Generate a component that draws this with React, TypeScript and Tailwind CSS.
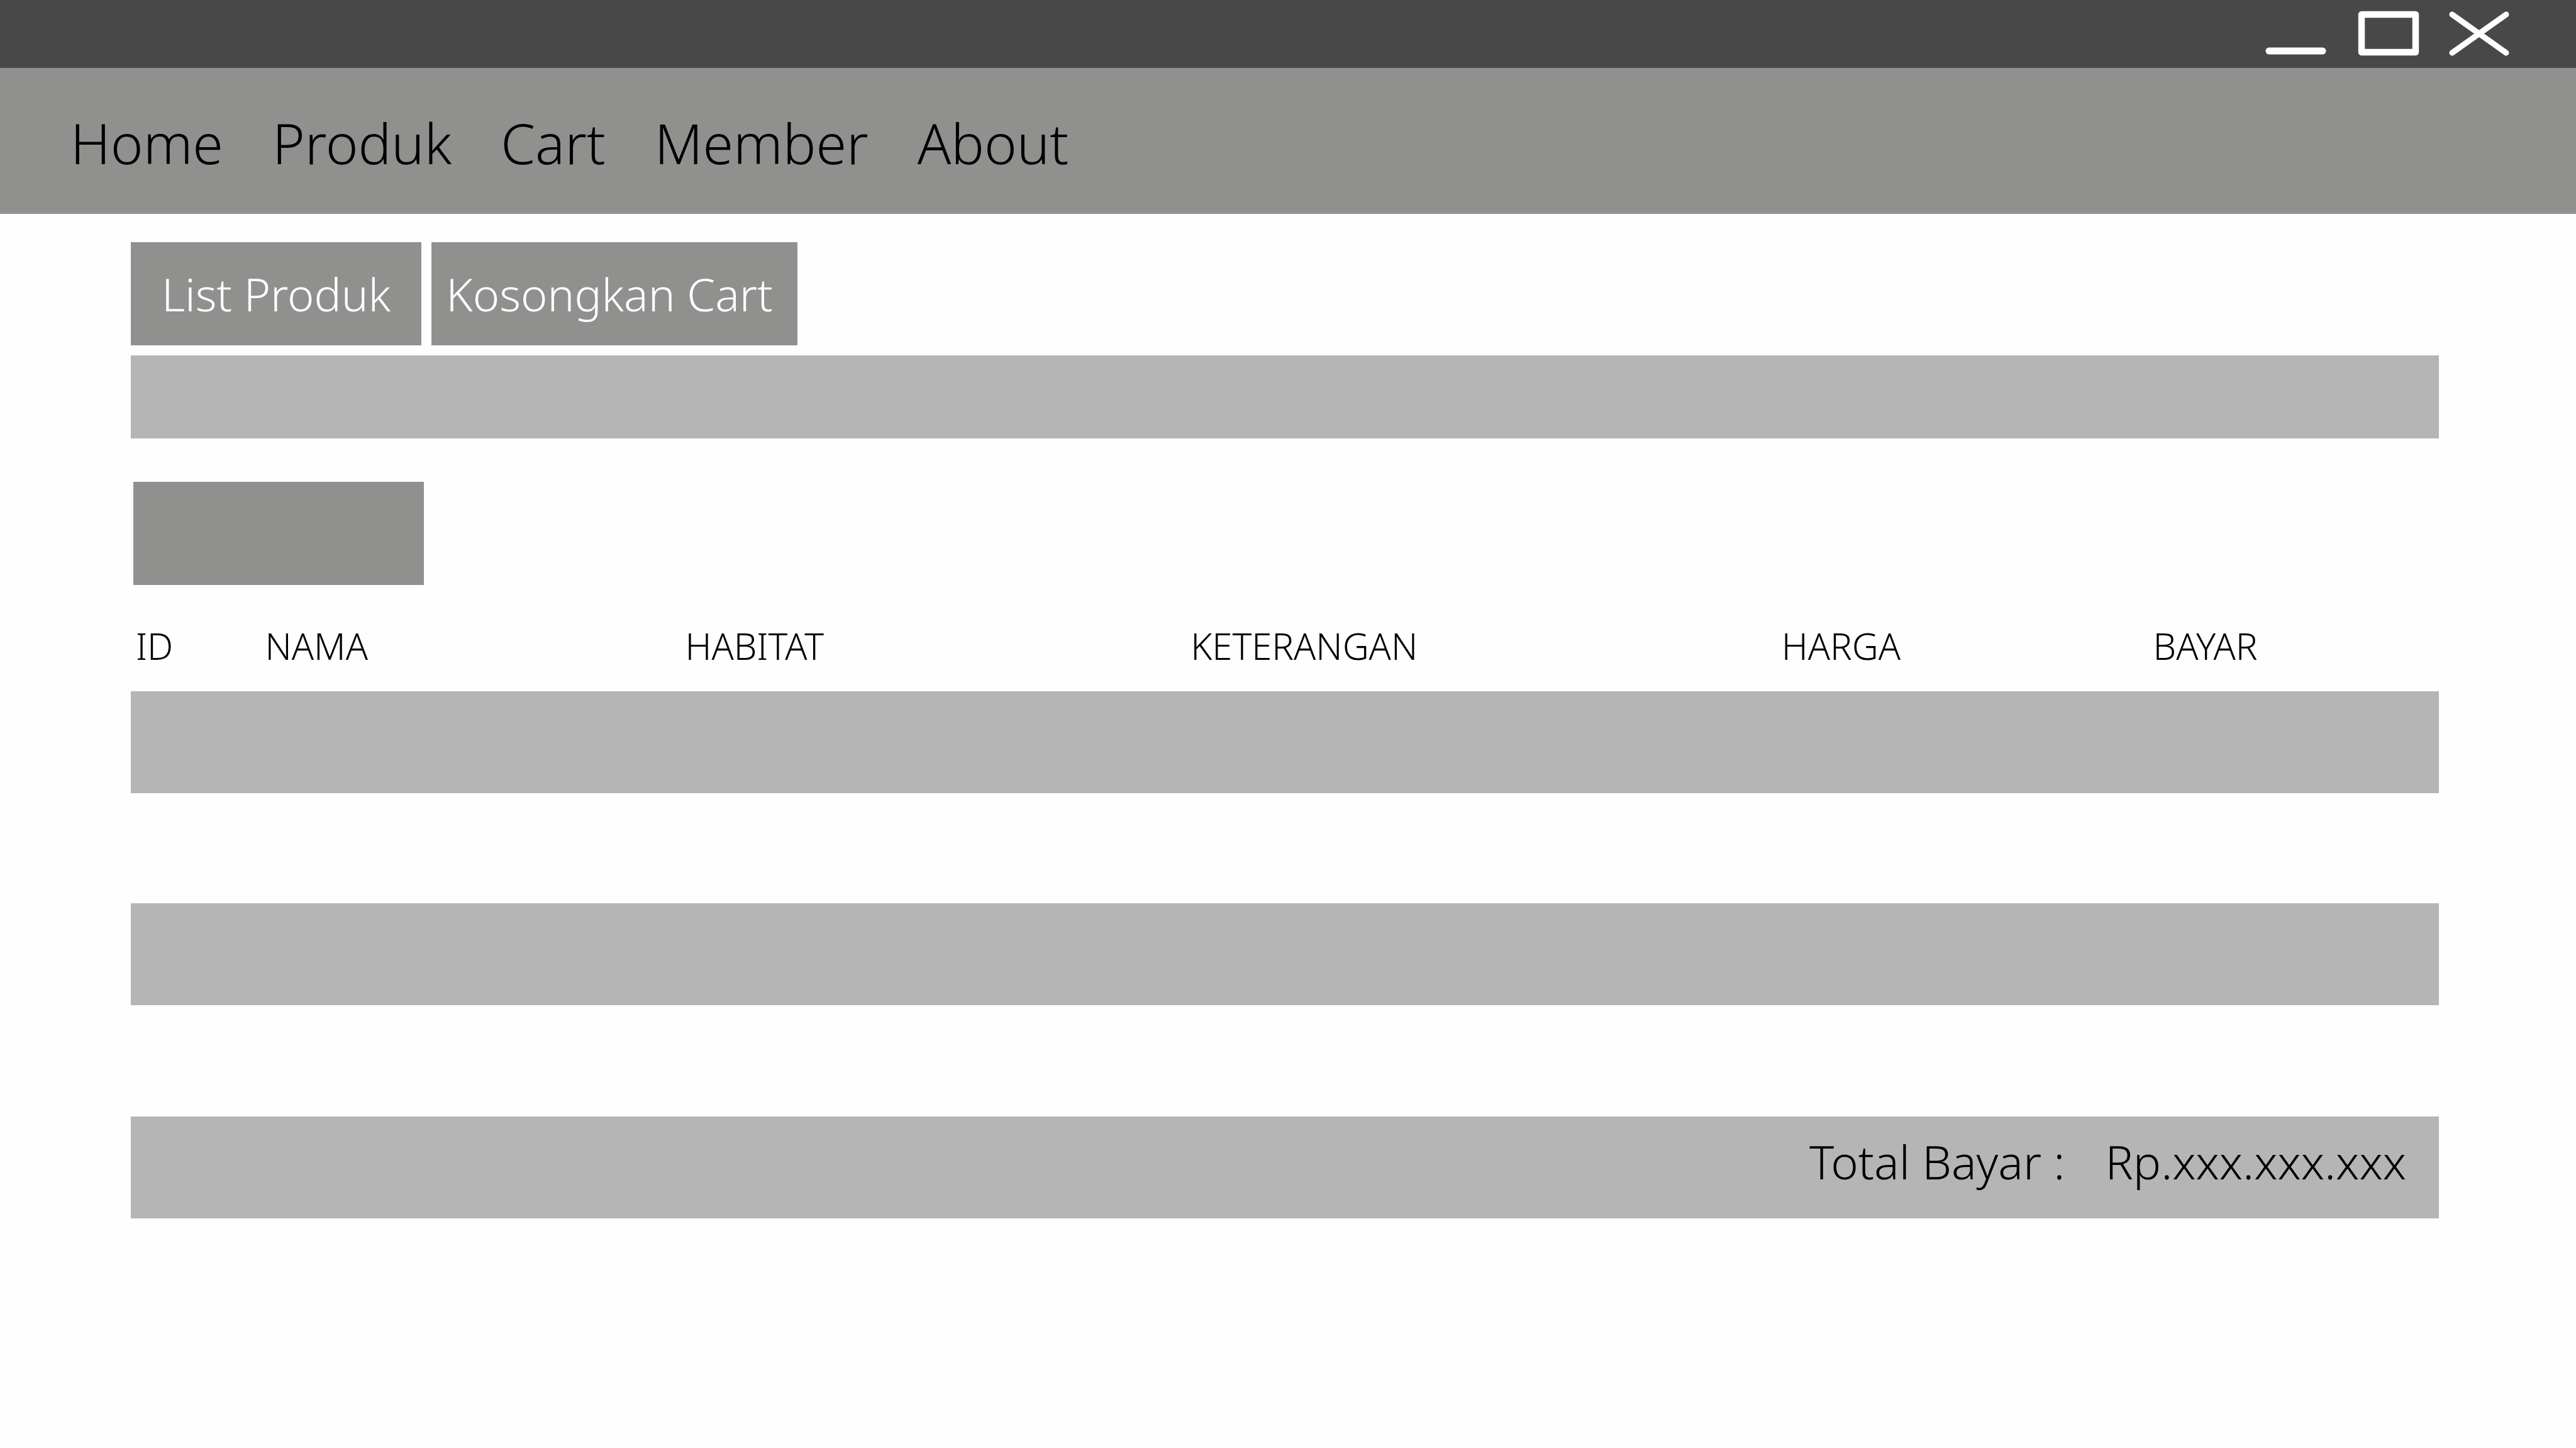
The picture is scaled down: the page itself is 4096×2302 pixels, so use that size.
import type { ReactNode } from "react";

const links = ["Home", "Produk", "Cart", "Member", "About"];

const columns = [
  { title: "ID", width: "w-[5.6%]" },
  { title: "NAMA", width: "w-[18.2%]" },
  { title: "HABITAT", width: "w-[21.9%]" },
  { title: "KETERANGAN", width: "w-[25.6%]" },
  { title: "HARGA", width: "w-[16.1%]" },
  { title: "BAYAR", width: "" },
];

// Empty rows, alternately filled and blank
const rows = [
  "h-[162px] bg-[#b5b5b5]",
  "h-[175px]",
  "h-[162px] bg-[#b5b5b5]",
  "h-[177px]",
];

function WindowButton({ label, children }: { label: string; children: ReactNode }) {
  return (
    <button type="button" aria-label={label}>
      <svg
        viewBox="0 0 96 72"
        className="block h-[72px] w-24 overflow-visible"
        fill="none"
        stroke="#ffffff"
        strokeLinecap="round"
        strokeLinejoin="round"
      >
        {children}
      </svg>
    </button>
  );
}

export default function App() {
  return (
    <div className="min-h-screen bg-[#fefefe] font-['Noto_Sans',sans-serif] font-[260] text-black">
      <div className="flex h-[108px] items-center justify-end gap-12 bg-[#484848] pr-[106px]">
        <WindowButton label="Minimize">
          <path d="M2 63H87" strokeWidth="11" />
        </WindowButton>
        <WindowButton label="Maximize">
          <rect x="5" y="5" width="86" height="60" strokeWidth="10.4" />
        </WindowButton>
        <WindowButton label="Close">
          <path d="M5 5L91 66M91 5L5 66" strokeWidth="9" />
        </WindowButton>
      </div>

      <nav className="flex h-[232px] items-center gap-[78px] bg-[#90908e] pt-1.5 pl-28 text-[88px]">
        {links.map((link) => (
          <a key={link} href={`#${link.toLowerCase()}`}>
            {link}
          </a>
        ))}
      </nav>

      <main className="pt-[45px] pr-[218px] pl-52">
        <div className="flex gap-4 text-[72px] text-white">
          <button type="button" className="h-[164px] w-[462px] bg-[#90908e]">
            List Produk
          </button>
          <button type="button" className="h-[164px] w-[582px] bg-[#90908e] pr-4">
            Kosongkan Cart
          </button>
        </div>
        <div className="mt-4 h-[132px] bg-[#b5b5b5]" />
        <button
          type="button"
          aria-label="Bayar"
          className="mt-[69px] ml-1 block h-[164px] w-[462px] bg-[#90908e]"
        />

        <table className="w-full table-fixed border-collapse">
          <thead>
            <tr className="h-[169px] text-left text-[58px]">
              {columns.map((column) => (
                <th key={column.title} scope="col" className={`px-2 pt-6 font-[260] ${column.width}`}>
                  {column.title}
                </th>
              ))}
            </tr>
          </thead>
          <tbody>
            {rows.map((row, index) => (
              <tr key={index} className={row}>
                {columns.map((column) => (
                  <td key={column.title} />
                ))}
              </tr>
            ))}
          </tbody>
          <tfoot>
            <tr className="h-[162px] bg-[#b5b5b5] text-[74px]">
              <td colSpan={6} className="pr-[52px] pb-5">
                <div className="flex justify-end gap-16">
                  <span>Total Bayar :</span>
                  <span>Rp.xxx.xxx.xxx</span>
                </div>
              </td>
            </tr>
          </tfoot>
        </table>
      </main>
    </div>
  );
}
